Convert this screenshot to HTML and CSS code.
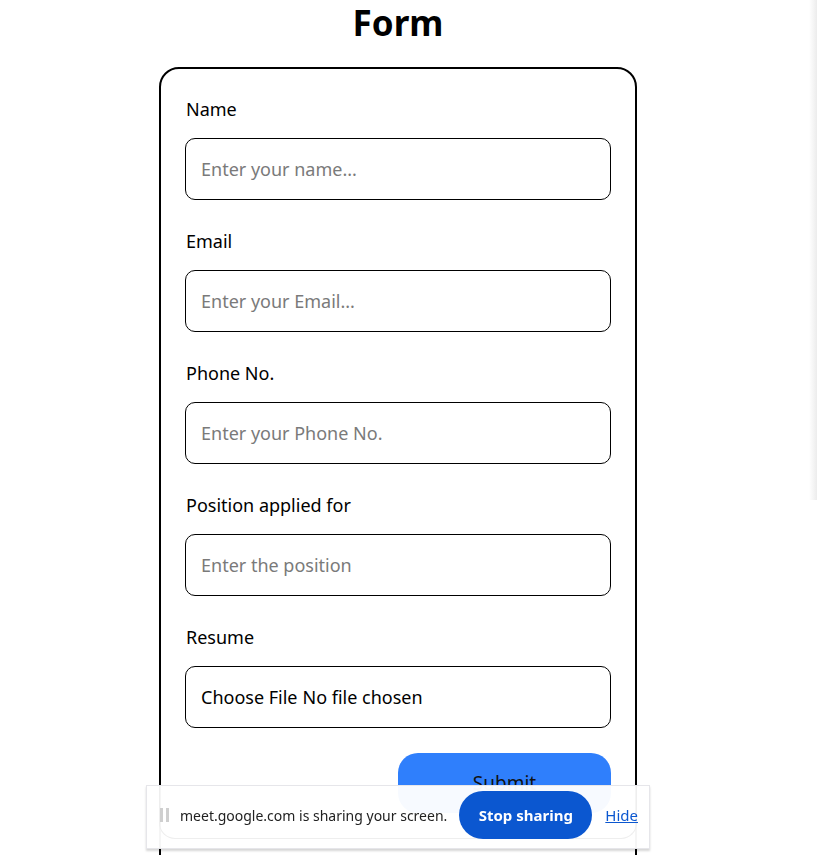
FILE: index.html
```html
<!DOCTYPE html>
<html lang="en">
<head>
<meta charset="utf-8">
<title>Form</title>
<link rel="stylesheet" href="styles.css">
</head>
<body>
<div class="layout">
  <main class="page">
    <h1 class="title">Form</h1>
    <form class="card">
      <label class="label" for="name">Name</label>
      <input class="field" id="name" type="text" placeholder="Enter your name...">
      <label class="label" for="email">Email</label>
      <input class="field" id="email" type="text" placeholder="Enter your Email...">
      <label class="label" for="phone">Phone No.</label>
      <input class="field" id="phone" type="text" placeholder="Enter your Phone No.">
      <label class="label" for="pos">Position applied for</label>
      <input class="field" id="pos" type="text" placeholder="Enter the position">
      <label class="label" for="resume">Resume</label>
      <div class="field file-field" id="resume"><span>Choose File</span> <span>No file chosen</span></div>
      <div class="actions">
        <button class="submit" type="button">Submit</button>
      </div>
    </form>
  </main>
  <div class="spacer"></div>
  <div class="edge"></div>
</div>
<div class="sharebar">
  <div class="sharebar-inner">
    <span class="handle"><i></i><i></i></span>
    <span class="share-text">meet.google.com is sharing your screen.</span>
    <button class="stop" type="button">Stop sharing</button>
    <a class="hide" href="#">Hide</a>
  </div>
</div>
</body>
</html>
```

FILE: styles.css
```css
* { box-sizing: border-box; }
html, body { margin: 0; padding: 0; background: #fff; }
body {
  font-family: "Noto Sans", "Open Sans", Arial, sans-serif;
  color: #000;
  overflow: hidden;
  height: 855px;
}
.layout { display: flex; align-items: flex-start; }
.page {
  width: 796px;
  display: flex;
  flex-direction: column;
  align-items: center;
}
.spacer { flex: 1; }
.edge {
  width: 8px;
  height: 500px;
  background: linear-gradient(to right, #ffffff, #ececec);
}
.title {
  margin: 0;
  font-size: 35px;
  line-height: 46px;
  font-weight: 700;
}
.card {
  margin-top: 21px;
  width: 478px;
  border: 2px solid #000;
  border-radius: 20px;
  padding: 28px 24px 60px;
  display: flex;
  flex-direction: column;
}
.label {
  font-size: 18px;
  line-height: 24px;
  margin-bottom: 17px;
  padding-left: 1px;
}
.field {
  height: 62px;
  width: 426px;
  border: 1px solid #000;
  border-radius: 10px;
  padding: 0 15px;
  font-family: inherit;
  font-size: 18px;
  margin: 0 0 29px 0;
  outline: none;
  background: #fff;
}
.field::placeholder { color: #7a7a7a; }
.file-field {
  display: flex;
  align-items: center;
  gap: 5px;
  margin-bottom: 25px;
}
.actions { display: flex; justify-content: flex-end; }
.submit {
  width: 213px;
  height: 60px;
  border: none;
  border-radius: 20px;
  background: #2f7ffc;
  color: #111;
  font-family: inherit;
  font-size: 19px;
}
.sharebar {
  position: fixed;
  left: 146px;
  top: 785px;
  width: 504px;
  height: 64px;
  background: rgba(255, 255, 255, 0.96);
  border: 1px solid #e6e6ea;
  box-shadow: 0 2px 2px rgba(0, 0, 0, 0.16);
  padding: 0 12px 9px 12px;
}
.sharebar-inner {
  height: 100%;
  border: 1px solid #eeeeee;
  border-top: none;
  border-radius: 0 0 16px 16px;
  display: flex;
  align-items: center;
  white-space: nowrap;
}
.handle { display: flex; gap: 3px; width: 20px; margin-top: 6px; flex: none; }
.handle i { display: block; width: 3px; height: 14px; background: #cfcfcf; }
.share-text {
  font-size: 14px;
  color: #222;
  margin-top: 6px;
  flex: none;
}
.stop {
  margin-left: 12px;
  width: 133px;
  height: 48px;
  flex: none;
  border: none;
  border-radius: 24px;
  background: #0b57d0;
  color: #fff;
  font-family: inherit;
  font-weight: 700;
  font-size: 15px;
  margin-top: 5px;
}
.hide {
  margin-left: 13px;
  color: #0b57d0;
  font-size: 15px;
  text-decoration: underline;
  margin-top: 6px;
  flex: none;
}
```
